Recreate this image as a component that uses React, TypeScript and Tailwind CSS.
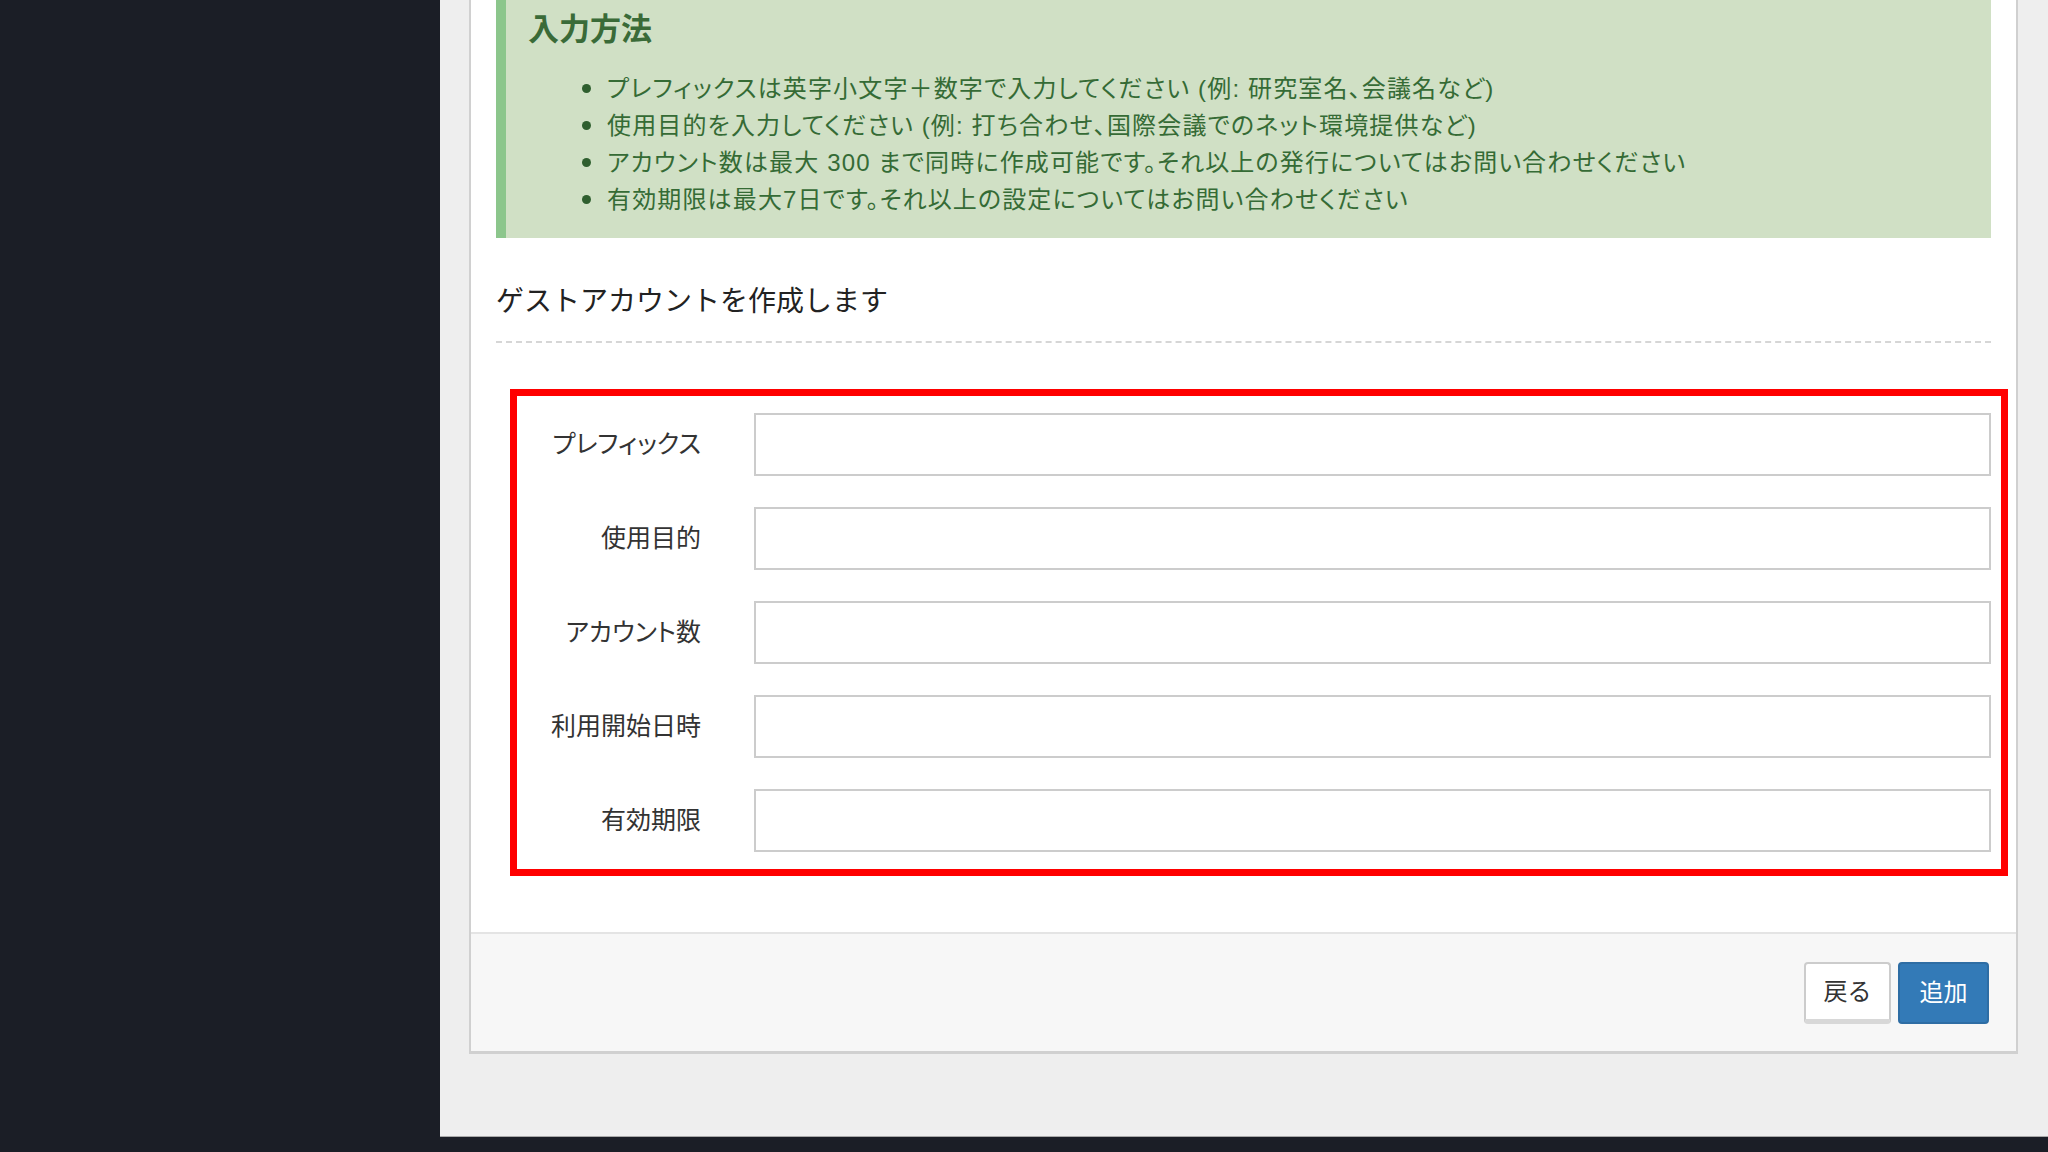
import React from 'react'

const notes = [
  'プレフィックスは英字小文字＋数字で入力してください (例: 研究室名、会議名など)',
  '使用目的を入力してください (例: 打ち合わせ、国際会議でのネット環境提供など)',
  'アカウント数は最大 300 まで同時に作成可能です。それ以上の発行についてはお問い合わせください',
  '有効期限は最大7日です。それ以上の設定についてはお問い合わせください',
]

const fields = ['プレフィックス', '使用目的', 'アカウント数', '利用開始日時', '有効期限']

export default function App(){
  return (
    <div className="flex h-[1152px] w-[2048px] overflow-hidden bg-[#1b1e26] font-['Liberation_Sans','Noto_Sans_CJK_JP',sans-serif]">
      {/* sidebar */}
      <div className="w-[440px] shrink-0 bg-[#1b1e26]" />

      <div className="flex-1">
        <div className="h-[1137px] bg-[#eeeeee] border-b border-[#a9a9a9] pl-[29px] pr-[30px]">
          <div className="bg-white border-x-2 border-b-[3px] border-[#d0d0d0]">
            <div className="px-[25px] pb-[56px]">
              {/* notice */}
              <div className="bg-[#d0e0c5] border-l-[10px] border-[#8cc68c] pl-[22px] pt-[12px] pb-[20px] text-[#356b35]">
                <h4 className="text-[31px] leading-[36px] font-bold text-[#3a6b38]">入力方法</h4>
                <ul className="mt-[22px]">
                  {notes.map(n => (
                    <li key={n} className="flex items-center text-[24px] leading-[37px] tracking-[1.15px] [font-feature-settings:'palt']">
                      <span className="ml-[54px] mr-[16px] w-[9px] h-[9px] rounded-full bg-[#2f5f2f] shrink-0" />
                      <span>{n}</span>
                    </li>
                  ))}
                </ul>
              </div>

              <h3 className="mt-[44px] text-[28px] leading-[40px] text-[#222]">ゲストアカウントを作成します</h3>
              <div className="mt-[19px] border-t-2 border-dashed border-[#d6d6d6]" />

              {/* form (highlighted) */}
              <div className="mt-[46px] ml-[14px] mr-[-17px] border-[7px] border-[#ff0000] py-[17px] pr-[10px] flex flex-col gap-[31px]">
                {fields.map(f => (
                  <div key={f} className="flex items-center">
                    <label className="w-[184px] shrink-0 text-right text-[25px] text-[#333] [font-feature-settings:'palt']">{f}</label>
                    <input type="text" className="ml-[53px] flex-1 h-[63px] border-2 border-[#cccccc] bg-white outline-none px-3 text-[22px]" />
                  </div>
                ))}
              </div>
            </div>

            {/* footer */}
            <div className="h-[119px] border-t-2 border-[#e4e4e4] bg-[#f7f7f7] flex items-center justify-end gap-[7px] pr-[27px] pt-[1px]">
              <button className="w-[87px] h-[62px] rounded-[4px] border-2 border-[#cccccc] border-b-[5px] border-b-[#d8d8d8] bg-white text-[24px] text-[#333]">戻る</button>
              <button className="w-[91px] h-[62px] rounded-[4px] border-2 border-[#2e6da4] bg-[#337ab7] text-[24px] text-white">追加</button>
            </div>
          </div>
        </div>
      </div>
    </div>
  )
}
